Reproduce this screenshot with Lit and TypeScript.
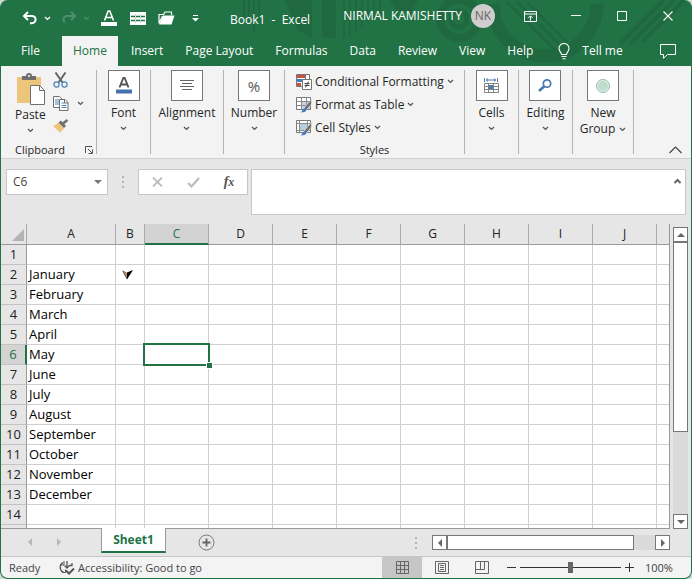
import { LitElement, html, svg, css, nothing } from "lit";
import { customElement, property } from "lit/decorators.js";
import { classMap } from "lit/directives/class-map.js";

const chevron = (w = 7) => html`<svg class="chev" width=${w} height="5" viewBox="0 0 7 5" aria-hidden="true">
  <path d="M1 1 L3.5 3.4 L6 1" fill="none" stroke="currentColor" stroke-width="1.3" /></svg>`;

const icon = (w: number, h: number, body: unknown) =>
  html`<svg width=${w} height=${h} viewBox="0 0 ${w} ${h}" fill="none" aria-hidden="true">${body}</svg>`;

const icons = {
  undo: icon(16, 14, svg`<path d="M6 1 L2 5 L6 9 M2 5 H10 A3.6 3.6 0 0 1 10 12.2 H8" stroke="currentColor" stroke-width="2"/>`),
  redo: icon(16, 14, svg`<path d="M10 1 L14 5 L10 9 M14 5 H6 A3.6 3.6 0 0 0 4 11.5" stroke="currentColor" stroke-width="2"/>`),
  fontColor: icon(16, 16, svg`<path d="M3.5 10.5 L7.2 1 H8.8 L12.5 10.5 M5 7.5 H11" stroke="#fff" stroke-width="1.6"/><path d="M0 12h16v4H0z" fill="#fff"/>`),
  table: icon(16, 13, svg`<path d="M0 0h16v13H0z" fill="#fff"/><path d="M1 4.5h4M6 4.5h4M11 4.5h4M1 8.5h4M6 8.5h4M11 8.5h4" stroke="#217346" stroke-width="1.6"/><path d="M5.5 2v9M10.5 2v9" stroke="#9cc4ae" stroke-width=".6"/>`),
  folder: icon(17, 14, svg`<path d="M1 12.5 V3.5 H5.5 L7 1 H13.5 V4 M1 12.5 L4.5 5" stroke="#fff" stroke-width="1.2"/><path d="M5 4.5 H16.5 L13.5 13.5 H1.2z" fill="#fff"/>`),
  customize: icon(7, 7, svg`<path d="M1 .5h5" stroke="#fff"/><path d="M0 3h7L3.5 6.5z" fill="#fff"/>`),
  ribbonMode: icon(13, 11, svg`<path d="M.5.5h12v10H.5zM.5 3h12M6.5 9.5V5M4.3 7l2.2-2.2L8.7 7" stroke="#fff"/>`),
  minimize: icon(10, 10, svg`<path d="M0 4.5h10" stroke="#fff"/>`),
  maximize: icon(10, 10, svg`<path d="M.5.5h9v9h-9z" stroke="#fff"/>`),
  close: icon(10, 10, svg`<path d="M.5.5l9 9M9.5.5l-9 9" stroke="#fff" stroke-width="1.1"/>`),
  bulb: icon(12, 17, svg`<path d="M3.5 11.5 C3.5 9.5 1 8.5 1 5.5 A5 5 0 0 1 11 5.5 C11 8.5 8.5 9.5 8.5 11.5z M3.5 13.5h5M4.5 15.8h3" stroke="#fff" stroke-width="1.1"/>`),
  comment: icon(16, 15, svg`<path d="M.5.5h15v10H7.5l-4 3.8v-3.8h-3z" stroke="#fff"/>`),
  paste: icon(29, 32, svg`<path d="M1 4h24v26H1z" fill="#ecc57b"/><path d="M6 7V3h4a3 3 0 0 1 6 0h4v4z" fill="#6f6f6f"/><circle cx="13" cy="3" r="1.1" fill="#f3f3f3"/><path d="M14.5 12.5h9l5 5v14h-14z" fill="#fff" stroke="#6f6f6f"/><path d="M23.5 12.5v5h5" stroke="#6f6f6f"/>`),
  cut: icon(15, 16, svg`<path d="M2.5.5l7 10M12.5.5l-7 10" stroke="#666" stroke-width="2"/><circle cx="3.5" cy="12.5" r="2.6" stroke="#4a84bf" stroke-width="1.2"/><circle cx="11.5" cy="12.5" r="2.6" stroke="#4a84bf" stroke-width="1.2"/>`),
  copy: icon(16, 15, svg`<path d="M.5.5h6l2.5 2.5v8.5H.5z" fill="#fff" stroke="#6f6f6f"/><path d="M2 4h4M2 6h4M2 8h4" stroke="#4a84bf"/><path d="M6.5 3.5h5.5l3 3v8h-8.5z" fill="#fff" stroke="#6f6f6f"/><path d="M8.5 7h3M8.5 9.5h5M8.5 11.5h5" stroke="#4a84bf"/><path d="M11.5 3.5v3.5h3.5" stroke="#6f6f6f"/>`),
  painter: icon(16, 14, svg`<path d="M0 7 L6 3.5 L11 9.5 L7 13.5z" fill="#ecc57b"/><path d="M5.5 3.5 L8 1.5 L13 7 L11 9z" fill="#6f6f6f"/><path d="M10 4.5 L14.5 1" stroke="#6f6f6f" stroke-width="2.6"/>`),
  launcher: icon(8, 8, svg`<path d="M.5 7V.5H7M3 3l4 4M7.5 3.5v4h-4" stroke="#555"/>`),
  font: icon(16, 17, svg`<path d="M3.5 10.5 L7.3 1 H8.7 L12.5 10.5 M5 7.5H11" stroke="#555" stroke-width="1.9"/><path d="M0 12.5h16v4H0z" fill="#4472aa"/>`),
  align: icon(14, 11, svg`<path d="M0 .5h14M2 3.5h10M0 6.5h14M2 9.5h10" stroke="#666"/>`),
  cells: icon(15, 16, svg`<path d="M.5 0v4M13.5 0v4M2 2h10M4 .5L2.3 2 4 3.5M10 .5L11.7 2 10 3.5" stroke="#4a78b0"/><path d="M.5 5.5h14v9H.5z" fill="#fff"/><path d="M4 7h5v4H4z" fill="#3f7fc0"/><path d="M.5 5.5h14v9H.5zM.5 8.5h14M.5 11.5h14M4.5 5.5v9M9.5 5.5v9" stroke="#777" stroke-width=".9"/>`),
  search: icon(14, 13, svg`<circle cx="9" cy="4.5" r="3.7" stroke="#4a78b0" stroke-width="1.7"/><path d="M6.3 7.3L1 12" stroke="#4a78b0" stroke-width="2.6"/>`),
  circle: icon(14, 14, svg`<circle cx="7" cy="7" r="6.5" fill="#e4f0ea" stroke="#8fb8a5"/><circle cx="7" cy="7" r="5" fill="#bfdccd"/>`),
  conditional: icon(16, 16, svg`<path d="M.5.5h13v12H.5z" fill="#fff" stroke="#777"/><path d="M1 1h4v3H1zM1 9h4v3H1z" fill="#c8503c"/><path d="M5 1h4v3H5z" fill="#c8503c"/><path d="M1 5h7v3H1z" fill="#3f7fc0"/><path d="M9.5 0v5" stroke="#777"/><path d="M6.5 5.5h9v10h-9z" fill="#fff" stroke="#777"/><path d="M8.5 9.5h5M8.5 11.5h5M12.5 7.5l-3 6" stroke="#444"/>`),
  formatTable: icon(16, 16, svg`<path d="M.5.5h14v12H.5z" fill="#fff" stroke="#777"/><path d="M5 4.5h9v7.5H5z" fill="#c3d5e6"/><path d="M.5 4.5h14M.5 8.5h14M5.5.5v12M10.5.5v12" stroke="#8a8a8a"/><path d="M15.500 2v5l-5 6-2.500-2z" fill="#6f6f6f" stroke="#f3f3f3" stroke-width=".6"/><path d="M4.500 15.500c2-.5 2-4.500 4.500-4.500 2.500 1 2.500 4.500-4.500 4.500z" fill="#3f7fc0"/>`),
  cellStyles: icon(16, 16, svg`<path d="M.5.5h14v12H.5z" fill="#fff" stroke="#777"/><path d="M4 4h7v6H4z" fill="#b9cde0"/><path d="M.5 3.5h14M.5 10.5h14M3.5.5v12M11.5.5v12" stroke="#8a8a8a"/><path d="M15.500 2v5l-5 6-2.500-2z" fill="#6f6f6f" stroke="#f3f3f3" stroke-width=".6"/><path d="M4.500 15.500c2-.5 2-4.500 4.500-4.500 2.500 1 2.500 4.500-4.500 4.500z" fill="#3f7fc0"/>`),
  collapse: icon(13, 8, svg`<path d="M.5 7L6.5 1l6 6" stroke="#444" stroke-width="1.2"/>`),
  cancel: icon(11, 10, svg`<path d="M1 .5l9 9M10 .5l-9 9" stroke="#bdbdbd" stroke-width="1.8"/>`),
  enter: icon(13, 11, svg`<path d="M1 6l3.5 3.5L12 1" stroke="#bdbdbd" stroke-width="2.2"/>`),
  expand: icon(7, 6, svg`<path d="M.5 5l3-3 3 3" stroke="#666" stroke-width="2"/>`),
  gripDots: icon(2, 12, svg`<path d="M0 0h2v2H0zM0 5h2v2H0zM0 10h2v2H0z" fill="#b3b3b3"/>`),
  add: icon(17, 17, svg`<circle cx="8.5" cy="8.5" r="7.5" stroke="#777"/><path d="M4.5 8.5h8M8.5 4.5v8" stroke="#666" stroke-width="1.8"/>`),
  access: icon(17, 15, svg`<path d="M5 2.5A5.5 5.5 0 0 0 6 12.5" stroke="#555" stroke-width="1.3"/><path d="M6 1v4H2M4 12.5h3.5V9.5" stroke="#555"/><path d="M9 1v7M6.5 5.5L9 8l2.5-2.5M14 3v2.5H11" stroke="#555" stroke-width="1.3"/><path d="M8 10.5l3 3 5-5" stroke="#555" stroke-width="2"/>`),
  normalView: icon(13, 13, svg`<path d="M.5.5h12v12H.5zM.5 4.5h12M.5 8.5h12M4.5.5v12M8.5.5v12" stroke="#666"/>`),
  layoutView: icon(14, 13, svg`<path d="M.5.5h13v12H.5zM3.5 2.5h7v8h-7zM5 4.5h4M5 6.5h4M5 8.5h4" stroke="#666"/>`),
  breakView: icon(14, 13, svg`<path d="M.5.5h13v12H.5zM.5 8.5h9v-8M5.5.5v8" stroke="#666"/>`),
  minus: icon(9, 9, svg`<path d="M0 4.5h9" stroke="#333"/>`),
  plus: icon(9, 9, svg`<path d="M0 4.5h9M4.5 0v9" stroke="#333"/>`),
  pointer: icon(11, 10, svg`<path d="M0 0l5 2.5v7z" fill="#b98b6a"/><path d="M1 1l4 8" stroke="#345" stroke-width=".8"/><path d="M11 0L5 2.5v7z" fill="#000"/>`),
};

const arrow = (dir: "up" | "down" | "left" | "right") => {
  const d = { up: "M0 6L4 2l4 4z", down: "M0 2l4 4 4-4z", left: "M6 0L2 4l4 4z", right: "M2 0l4 4-4 4z" }[dir];
  return html`<svg width="8" height="8" viewBox="0 0 8 8" aria-hidden="true"><path d=${d} fill="currentColor" /></svg>`;
};

const control = css`
  :host, * { box-sizing: border-box; }
  svg { display: block; flex: none; }
  button {
    font: inherit; color: inherit; background: none; border: 0; padding: 0; margin: 0;
    display: flex; align-items: center; justify-content: center; flex: none; white-space: nowrap;
  }
`;

@customElement("title-bar")
class TitleBar extends LitElement {
  static styles = [control, css`
    :host { display: flex; height: 36px; color: #fff; }
    .quick { display: flex; align-items: center; width: 229px; padding-left: 21px; }
    .split { gap: 6px; margin-right: 10px; }
    .split.dim { color: #4c9069; margin-right: 4px; }
    .tool { width: 29px; }
    .name { padding-top: 4px; line-height: 32px; white-space: pre; flex: 1 1 0; min-width: 0; overflow: hidden; }
    .right { display: flex; height: 32px; align-items: center; }
    .avatar {
      width: 24px; height: 24px; border-radius: 50%; margin: 0 12px 0 9px; background: #cfcdcd; color: #666;
    }
    .win { width: 46px; height: 32px; }
  `];
  render() {
    return html`
      <div class="quick">
        <button class="split" aria-label="Undo">${icons.undo}${chevron()}</button>
        <button class="split dim" aria-label="Redo">${icons.redo}${chevron()}</button>
        <button class="tool" aria-label="Font color">${icons.fontColor}</button>
        <button class="tool" aria-label="Insert table">${icons.table}</button>
        <button class="tool" aria-label="Open">${icons.folder}</button>
        <button class="tool" aria-label="Customize toolbar">${icons.customize}</button>
      </div>
      <div class="name">Book1  -  Excel</div>
      <div class="right">
        <span>NIRMAL KAMISHETTY</span>
        <button class="avatar">NK</button>
        <button class="win" aria-label="Ribbon display options">${icons.ribbonMode}</button>
        <button class="win" aria-label="Minimize">${icons.minimize}</button>
        <button class="win" aria-label="Maximize">${icons.maximize}</button>
        <button class="win" aria-label="Close">${icons.close}</button>
      </div>`;
  }
}

@customElement("menu-tabs")
class MenuTabs extends LitElement {
  static styles = [control, css`
    :host { display: flex; height: 30px; color: #fff; padding-left: 9px; }
    button { padding: 0 11px; }
    .file { padding-right: 22px; }
    .on { background: #f3f3f3; color: #217346; margin-right: 2px; }
    .tell { gap: 12px; padding-left: 14px; }
    .comment { margin-left: auto; padding: 0 15px; }
  `];
  render() {
    return html`
      ${["File", "Home", "Insert", "Page Layout", "Formulas", "Data", "Review", "View", "Help"].map(t =>
        html`<button class=${classMap({ on: t === "Home", file: t === "File" })}>${t}</button>`)}
      <button class="tell">${icons.bulb}Tell me</button>
      <button class="comment" aria-label="Comments">${icons.comment}</button>`;
  }
}

@customElement("ribbon-bar")
class RibbonBar extends LitElement {
  static styles = [control, css`
    :host { display: flex; height: 93px; padding: 4px 0; background: #f3f3f3; border-bottom: 1px solid #d0d0d0; color: #262626; }
    .group { border-right: 1px solid #b5b5b5; width: 54px; flex: none; display: flex; flex-direction: column; align-items: center; }
    .group.wide { width: 73px; }
    .group.mid { width: 61px; }
    .group.clip { width: 96px; padding: 0 3px 0 14px; align-items: stretch; }
    .group.styles { width: 180px; align-items: stretch; }
    .big { flex-direction: column; }
    .tile { width: 32px; height: 31px; border: 1px solid #777; background: #fff; display: flex; align-items: center; justify-content: center; font-size: 15px; color: #555; }
    .label { line-height: 16px; margin-top: 4px; }
    .big > .chev { margin-top: 5px; }
    .two { display: flex; align-items: center; gap: 4px; line-height: 16px; }
    .chev { color: #555; }
    .row { display: flex; flex: 1; align-items: flex-start; gap: 7px; padding-top: 2px; }
    .paste { padding-top: 1px; }
    .paste .label { margin-top: 2px; }
    .tools { display: flex; flex-direction: column; gap: 8px; align-items: flex-start; }
    .tools button { gap: 8px; }
    .foot { display: flex; justify-content: space-between; align-items: center; height: 16px; line-height: 16px; font-size: 11px; margin-bottom: -4px; }
    .foot.center { justify-content: center; }
    .list { flex: 1; display: flex; flex-direction: column; align-items: flex-start; padding-left: 11px; }
    .list button { height: 23px; gap: 3px; }
    .collapse { margin: auto 9px 0 auto; }
  `];
  private tile(pic: unknown, label: string, size = "") {
    return html`<div class="group ${size}"><button class="big">
      <span class="tile">${pic}</span><span class="label">${label}</span>${chevron()}</button></div>`;
  }
  render() {
    return html`
      <div class="group clip">
        <div class="row">
          <button class="big paste">${icons.paste}<span class="label">Paste</span>${chevron()}</button>
          <div class="tools">
            <button aria-label="Cut">${icons.cut}</button>
            <button aria-label="Copy">${icons.copy}${chevron()}</button>
            <button aria-label="Format Painter">${icons.painter}</button>
          </div>
        </div>
        <div class="foot"><span>Clipboard</span><button aria-label="Clipboard settings">${icons.launcher}</button></div>
      </div>
      ${this.tile(icons.font, "Font")}
      ${this.tile(icons.align, "Alignment", "wide")}
      ${this.tile("%", "Number", "mid")}
      <div class="group styles">
        <div class="list">
          <button>${icons.conditional}Conditional Formatting${chevron()}</button>
          <button>${icons.formatTable}Format as Table${chevron()}</button>
          <button>${icons.cellStyles}Cell Styles${chevron()}</button>
        </div>
        <div class="foot center">Styles</div>
      </div>
      ${this.tile(icons.cells, "Cells")}
      ${this.tile(icons.search, "Editing")}
      <div class="group mid"><button class="big"><span class="tile">${icons.circle}</span>
        <span class="label">New</span><span class="two">Group ${chevron()}</span></button></div>
      <button class="collapse" aria-label="Collapse ribbon">${icons.collapse}</button>`;
  }
}

@customElement("formula-bar")
class FormulaBar extends LitElement {
  static styles = [control, css`
    :host { display: flex; align-items: flex-start; height: 65px; padding: 10px 5px 0; background: #e6e6e6; color: #444; }
    .box { display: flex; align-items: center; background: #fff; border: 1px solid #c6c6c6; height: 26px; }
    input, textarea { font: inherit; color: inherit; border: 0; outline: 0; background: none; padding: 0; min-width: 0; resize: none; }
    .ref { width: 102px; padding: 0 5px 0 6px; }
    .ref input { flex: 1; }
    .ref button { color: #777; }
    .grip { width: 30px; height: 26px; display: flex; align-items: center; justify-content: center; }
    .acts { width: 110px; justify-content: space-around; margin-right: 3px; }
    .acts button { width: 36px; }
    .acts .fx { font: italic bold 14px "Liberation Serif", serif; color: #555; }
    .sub { font-size: 12px; }
    .formula { flex: 1; height: 46px; align-items: flex-start; padding: 8px 4px; }
    .formula textarea { flex: 1; height: 28px; }
  `];
  render() {
    return html`
      <div class="box ref"><input aria-label="Name Box" value="C6" /><button aria-label="Cell names">${arrow("down")}</button></div>
      <div class="grip">${icons.gripDots}</div>
      <div class="box acts">
        <button aria-label="Cancel">${icons.cancel}</button>
        <button aria-label="Enter">${icons.enter}</button>
        <button class="fx" aria-label="Insert function">f<span class="sub">x</span></button>
      </div>
      <div class="box formula"><textarea aria-label="Formula"></textarea>
        <button aria-label="Expand formula bar">${icons.expand}</button></div>`;
  }
}

@customElement("scroll-bar")
class ScrollBar extends LitElement {
  @property({ type: Boolean, reflect: true }) vertical = false;
  static styles = [control, css`
    :host { display: flex; height: 15px; background: #dadada; color: #666; }
    :host([vertical]) { flex-direction: column; width: 15px; height: auto; }
    button { width: 15px; height: 15px; background: #fff; border: 1px solid #777; }
    .track { flex: 1; display: flex; flex-direction: inherit; }
    .thumb { background: #fff; border: 1px solid #777; flex: 0 0 90%; }
    :host([vertical]) .thumb { flex-basis: 70%; }
  `];
  render() {
    return html`<button aria-label="Scroll back">${arrow(this.vertical ? "up" : "left")}</button>
      <div class="track"><div class="thumb"></div></div>
      <button aria-label="Scroll forward">${arrow(this.vertical ? "down" : "right")}</button>`;
  }
}

const COLUMNS = ["A", "B", "C", "D", "E", "F", "G", "H", "I", "J"];
const MONTHS = ["January", "February", "March", "April", "May", "June", "July",
  "August", "September", "October", "November", "December"];

@customElement("sheet-grid")
class SheetGrid extends LitElement {
  static styles = [control, css`
    :host { display: flex; flex: 1; background: #e6e6e6; color: #000; }
    .area { flex: 1; min-width: 0; overflow: hidden; background: #fff; border-right: 1px solid #999; border-bottom: 1px solid #999; font-size: 13px; }
    table { table-layout: fixed; width: 100%; border-collapse: separate; border-spacing: 0; }
    .c0 { width: 26px; } .c1 { width: 89px; } .c2 { width: 29px; } .c3 { width: 64px; }
    th, td { height: 20px; padding: 0; line-height: 19px; border: 0 solid #d0d0d0; border-width: 0 1px 1px 0; white-space: nowrap; }
    th { font-weight: 400; background: #e6e6e6; text-align: center; color: #222; }
    td { padding-left: 2px; position: relative; }
    thead th { height: 21px; border-bottom-color: #999; border-right-color: #aaa; font-size: 12px; line-height: 20px; }
    tbody th { border-right-color: #999; border-bottom-color: #c3c3c3; }
    tr > :last-child { border-right-width: 0; }
    thead .on { background: #d3d3d3; color: #217346; border-bottom: 2px solid #217346; line-height: 19px; }
    tbody .on { background: #d3d3d3; color: #217346; border-right: 2px solid #217346; }
    .corner svg { margin: 2px 2px 0 auto; }
    .part th, .part td { height: 3px; border-bottom: 0; }
    .sel { position: absolute; inset: -2px; border: 2px solid #217346; z-index: 1; }
    .sel::after { content: ""; position: absolute; right: -4px; bottom: -4px; width: 5px; height: 5px; background: #217346; outline: 1px solid #fff; }
    .b2 { padding-left: 6px; }
    scroll-bar { margin: 3px 3px 0 3px; }
  `];
  render() {
    const last = 14;
    return html`<div class="area"><table>
      <colgroup><col class="c0" /><col class="c1" /><col class="c2" />${COLUMNS.slice(2).map(() => html`<col class="c3" />`)}<col /></colgroup>
      <thead><tr><th class="corner">${icon(12, 12, svg`<path d="M12 0v12H0z" fill="#b3b3b3"/>`)}</th>
        ${COLUMNS.map(c => html`<th scope="col" class=${classMap({ on: c === "C" })}>${c}</th>`)}<th></th></tr></thead>
      <tbody>${Array.from({ length: last }, (_, i) => i + 1).map(n => html`<tr>
        <th scope="row" class=${classMap({ on: n === 6 })}>${n}</th>
        ${COLUMNS.map(c => html`<td class=${classMap({ b2: c === "B" && n === 2 })}>${
          c === "A" ? MONTHS[n - 2] ?? nothing
          : c === "B" && n === 2 ? icons.pointer
          : c === "C" && n === 6 ? html`<div class="sel"></div>` : nothing}</td>`)}<td></td></tr>`)}
        <tr class="part"><th></th>${COLUMNS.map(() => html`<td></td>`)}<td></td></tr>
      </tbody></table></div>
      <scroll-bar vertical></scroll-bar>`;
  }
}

@customElement("sheet-tabs")
class SheetTabs extends LitElement {
  static styles = [control, css`
    :host { display: flex; height: 28px; background: #e6e6e6; border-bottom: 1px solid #c6c6c6; }
    .nav { display: flex; width: 100px; padding: 0 38px 2px 25px; justify-content: space-between; color: #b8b8b8; }
    .tab { height: 25px; width: 65px; margin-top: -1px; background: #fff; color: #217346; font-weight: 700; border: 1px solid #999; border-width: 0 1px 2px; border-bottom-color: #217346; z-index: 1; }
    .add { margin-left: 32px; }
    .grip { margin-left: auto; padding: 8px 15px 0 0; }
    scroll-bar { flex: 0 1 238px; margin: 6px 21px 0 0; }
  `];
  render() {
    return html`<div class="nav"><button aria-label="Previous sheet">${arrow("left")}</button><button aria-label="Next sheet">${arrow("right")}</button></div>
      <button class="tab">Sheet1</button>
      <button class="add" aria-label="New sheet">${icons.add}</button>
      <div class="grip">${icons.gripDots}</div><scroll-bar></scroll-bar>`;
  }
}

@customElement("status-bar")
class StatusBar extends LitElement {
  static styles = [control, css`
    :host { display: flex; align-items: stretch; height: 21px; background: #f3f3f3; color: #444; font-size: 11px; }
    span, button { display: flex; align-items: center; }
    .ready { width: 57px; padding-left: 8px; }
    .acc { gap: 3px; }
    .view { width: 40px; }
    .view.on { background: #c6c6c6; }
    .views { display: flex; margin-left: auto; }
    .zoom { margin: 0 4px; }
    .zoom.out { margin-left: 5px; }
    .range { width: 101px; margin: 0; appearance: none; background: linear-gradient(#333, #333) center / 100% 1px no-repeat; }
    .range::-webkit-slider-thumb { appearance: none; width: 5px; height: 11px; background: #666; }
    .pct { width: 46px; margin-left: 7px; }
  `];
  render() {
    return html`<span class="ready">Ready</span>
      <button class="acc">${icons.access}Accessibility: Good to go</button>
      <div class="views">
        <button class="view on" aria-label="Normal">${icons.normalView}</button>
        <button class="view" aria-label="Page Layout">${icons.layoutView}</button>
        <button class="view" aria-label="Page Break Preview">${icons.breakView}</button>
      </div>
      <button class="zoom out" aria-label="Zoom out">${icons.minus}</button>
      <input class="range" type="range" aria-label="Zoom" min="0" max="100" .value=${"50"} />
      <button class="zoom" aria-label="Zoom in">${icons.plus}</button>
      <span class="pct">100%</span>`;
  }
}

@customElement("app-root")
class AppRoot extends LitElement {
  static styles = css`
    :host { display: block; background: #cdd8d0; font: 12px/16px "Open Sans", "Noto Sans", sans-serif; }
    .window { box-sizing: border-box; min-height: 100vh; display: flex; flex-direction: column; border: 1px solid #217346; border-top: 0; border-radius: 8px; overflow: hidden; background: #217346; }
    .head { position: relative; }
    .art { position: absolute; top: 0; right: 0; width: 460px; height: 66px; }
    title-bar, menu-tabs { position: relative; }
  `;
  render() {
    return html`<div class="window">
      <header class="head">
        <svg class="art" viewBox="231 0 460 66" fill="none" stroke="#1f6840" aria-hidden="true">
          <path d="M244 0v20M249 0v20M254 0v32M259 0v20" stroke-width="2" />
          <path d="M285 0h27v38l-14-8z M322 0h14v38h-14z M390 0h28l-7 12h-14z" fill="#1f6840" stroke="none" />
          <path d="M344 0v38M350 0v35M356 0v31M362 0v27M368 0v23M374 0v19M380 0v15" stroke-width="2" />
          <circle cx="459" cy="19" r="19" stroke-width="8" />
          <circle cx="459" cy="19" r="8" stroke-width="5" />
          <path d="M493 0 A52 52 0 0 0 597 0" stroke-width="13" transform="translate(0 4)" />
          <path d="M507 2l48 48M517 2l44 44M527 2l40 40" stroke-width="3" />
          <path d="M620 44L664 0M630 44L674 0M642 42L684 0" stroke-width="4" />
        </svg>
        <title-bar></title-bar>
        <menu-tabs></menu-tabs>
      </header>
      <ribbon-bar></ribbon-bar>
      <formula-bar></formula-bar>
      <sheet-grid></sheet-grid>
      <sheet-tabs></sheet-tabs>
      <status-bar></status-bar>
    </div>`;
  }
}
